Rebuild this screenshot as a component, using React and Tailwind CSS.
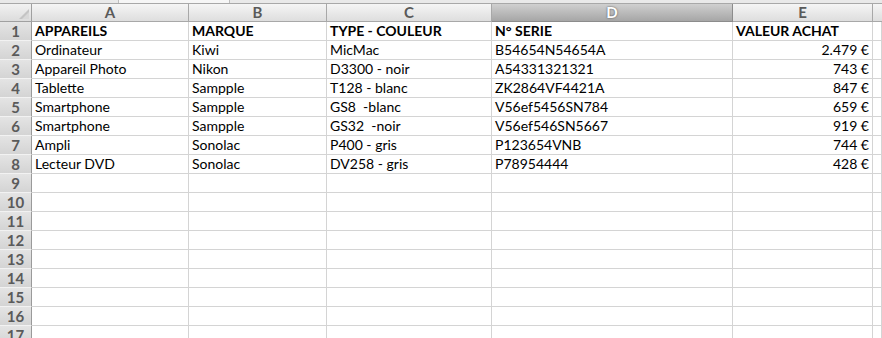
const cols = ['A', 'B', 'C', 'D', 'E']

const rows = [
  ['APPAREILS', 'MARQUE', 'TYPE - COULEUR', 'N° SERIE', 'VALEUR ACHAT'],
  ['Ordinateur', 'Kiwi', 'MicMac', 'B54654N54654A', '2.479 €'],
  ['Appareil Photo', 'Nikon', 'D3300 - noir', 'A54331321321', '743 €'],
  ['Tablette', 'Sampple', 'T128 - blanc', 'ZK2864VF4421A', '847 €'],
  ['Smartphone', 'Sampple', 'GS8  -blanc', 'V56ef5456SN784', '659 €'],
  ['Smartphone', 'Sampple', 'GS32  -noir', 'V56ef546SN5667', '919 €'],
  ['Ampli', 'Sonolac', 'P400 - gris', 'P123654VNB', '744 €'],
  ['Lecteur DVD', 'Sonolac', 'DV258 - gris', 'P78954444', '428 €'],
]

const gridCols = 'grid grid-cols-[32px_157px_138px_165px_241px_140px_1fr]'

function RowNum({ n }) {
  return (
    <div className="h-[19px] bg-gradient-to-b from-[#e4e4e4] to-[#d4d4d4] border-r border-r-[#9a9a9a] border-b border-b-[#f2f2f2] flex items-center justify-center pt-[1px] text-[15px] font-bold text-[#5a5a5a] leading-none">
      {n}
    </div>
  )
}

export default function App() {
  const body = []
  for (let i = 0; i < 17; i++) {
    const data = rows[i]
    body.push(
      <div key={i} className={gridCols}>
        <RowNum n={i + 1} />
        {[0, 1, 2, 3, 4, 5].map((c) => {
          const text = data && c < 5 ? data[c] : ''
          const right = c === 4 && i > 0
          return (
            <div
              key={c}
              className={
                'h-[19px] border-r border-b border-[#d4d4d4] flex items-end pb-[2px] px-[3px] text-[14px] leading-none text-black whitespace-pre overflow-hidden ' +
                (i === 0 ? 'font-bold ' : '') +
                (right ? 'justify-end' : '')
              }
            >
              {text}
            </div>
          )
        })}
      </div>
    )
  }

  return (
    <div className="w-[882px] h-[338px] overflow-hidden bg-white font-['Lato','Liberation_Sans',sans-serif]">
      {/* window strip */}
      <div className="h-[4px] bg-[#e9e9e9] border-b border-[#a8a8a8] relative">
        <div className="absolute left-[118px] top-0 w-[112px] h-[3px] bg-[#f6f6f6] border-x border-[#bdbdbd]" />
      </div>

      {/* column headers */}
      <div className={gridCols}>
        <div className="h-[18px] bg-gradient-to-b from-[#f2f2f2] to-[#dcdcdc] border-r border-b border-[#a0a0a0] relative">
          <svg className="absolute right-[2px] bottom-[2px]" width="10" height="10" viewBox="0 0 10 10">
            <polygon points="10,0 10,10 0,10" fill="#c4c4c4" />
            <polygon points="10,3 10,10 3,10" fill="#d8d8d8" />
          </svg>
        </div>
        {cols.map((c) => (
          <div
            key={c}
            className={
              'h-[18px] border-r border-b flex items-center justify-center text-[15px] font-bold leading-none ' +
              (c === 'D'
                ? 'bg-gradient-to-b from-[#d0d0d0] to-[#a6a6a6] border-[#8c8c8c] text-white [text-shadow:0_0_2px_#444]'
                : 'bg-gradient-to-b from-[#f5f5f5] to-[#dedede] border-[#a8a8a8] text-[#5a5a5a]')
            }
          >
            {c}
          </div>
        ))}
        <div className="h-[18px] bg-gradient-to-b from-[#f5f5f5] to-[#dedede] border-b border-[#a8a8a8]" />
      </div>

      {body}
    </div>
  )
}
